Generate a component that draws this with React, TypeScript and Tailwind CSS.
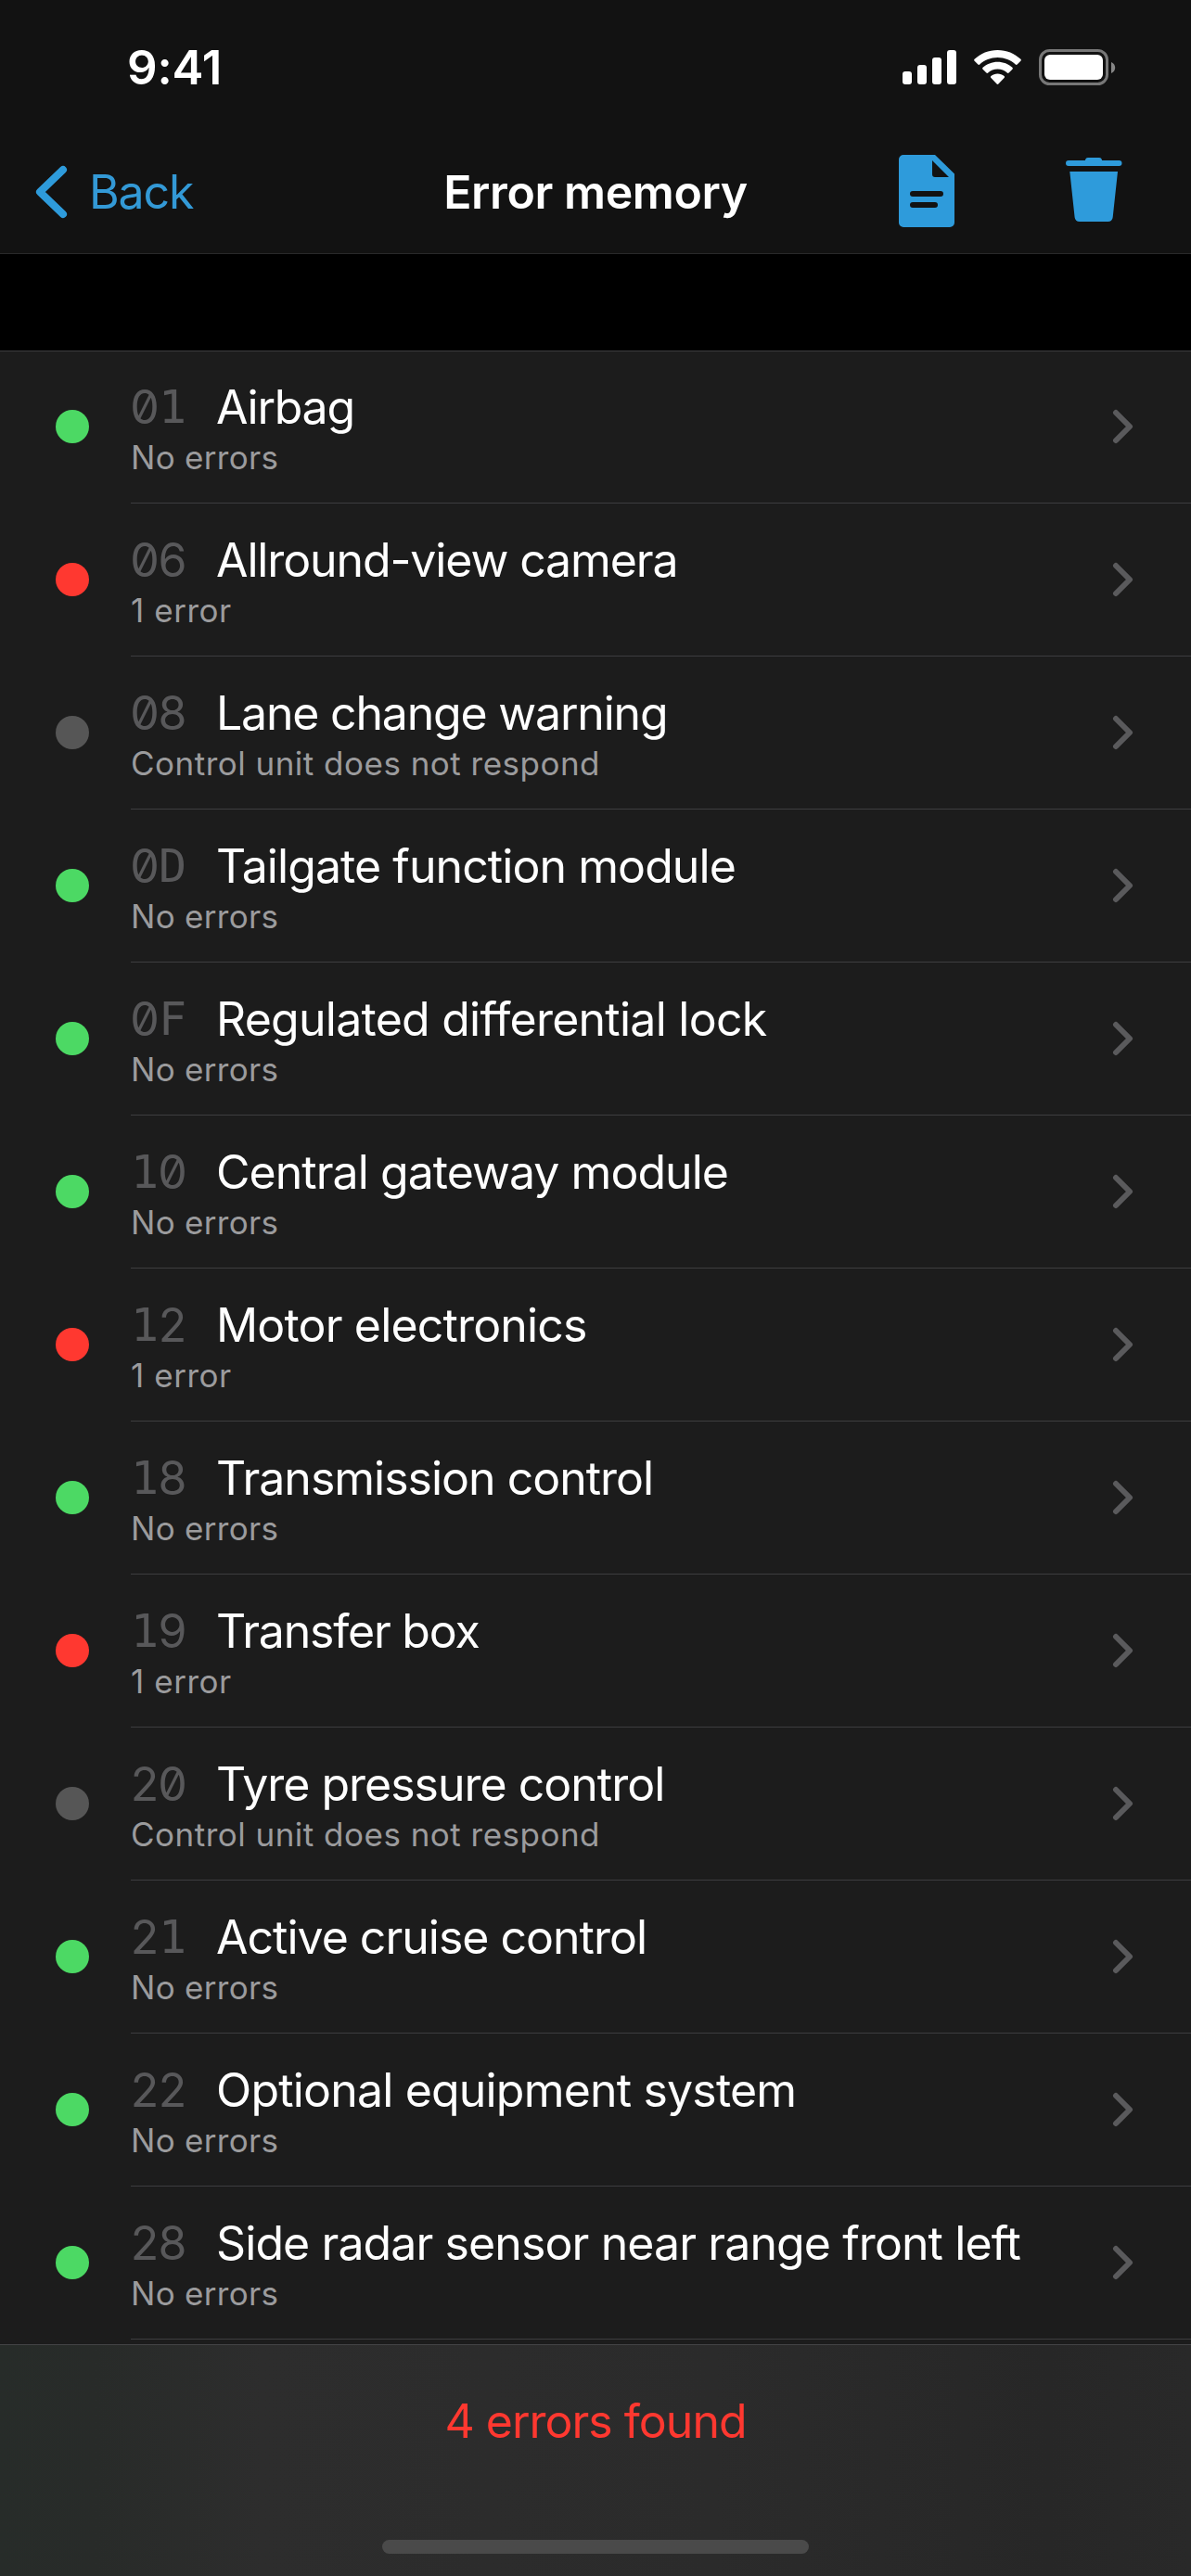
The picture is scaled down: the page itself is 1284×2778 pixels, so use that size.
type Status = "ok" | "error" | "offline"

type Unit = {
  code: string
  name: string
  status: Status
  tracking: string
}

const units: Unit[] = [
  { code: "01", name: "Airbag", status: "ok", tracking: "tracking-[-1.250px]" },
  { code: "06", name: "Allround-view camera", status: "error", tracking: "tracking-[-1.120px]" },
  { code: "08", name: "Lane change warning", status: "offline", tracking: "tracking-[-1.200px]" },
  { code: "0D", name: "Tailgate function module", status: "ok", tracking: "tracking-[-0.930px]" },
  { code: "0F", name: "Regulated differential lock", status: "ok", tracking: "tracking-[-0.750px]" },
  { code: "10", name: "Central gateway module", status: "ok", tracking: "tracking-[-0.960px]" },
  { code: "12", name: "Motor electronics", status: "error", tracking: "tracking-[-0.840px]" },
  { code: "18", name: "Transmission control", status: "ok", tracking: "tracking-[-1.000px]" },
  { code: "19", name: "Transfer box", status: "error", tracking: "tracking-[-1.220px]" },
  { code: "20", name: "Tyre pressure control", status: "offline", tracking: "tracking-[-1.000px]" },
  { code: "21", name: "Active cruise control", status: "ok", tracking: "tracking-[-1.000px]" },
  { code: "22", name: "Optional equipment system", status: "ok", tracking: "tracking-[-0.820px]" },
  { code: "28", name: "Side radar sensor near range front left", status: "ok", tracking: "tracking-[-0.900px]" },
]

const dotColor = {
  ok: "bg-[#4cd964]",
  error: "bg-[#ff3830]",
  offline: "bg-[#565656]",
}

const statusText = {
  ok: "No errors",
  error: "1 error",
  offline: "Control unit does not respond",
}

const statusTracking = {
  ok: "tracking-[0.300px]",
  error: "tracking-[0.550px]",
  offline: "tracking-[0.490px]",
}

function StatusIcons() {
  return (
    <svg className="w-[232px] h-[42px]" viewBox="972 52 232 42" fill="white">
      <rect x="973" y="77" width="10" height="14" rx="3" />
      <rect x="989" y="70" width="10" height="21" rx="3" />
      <rect x="1005" y="62" width="10" height="29" rx="3" />
      <rect x="1021" y="54" width="10" height="37" rx="3" />
      <path d="M1075.5 54c-9.600 0-18.300 3.700-24.900 9.800-.6.600-.6 1.300 0 1.900l3.800 3.800c.5.500 1.300.5 1.800 0 5.100-4.700 11.800-7.500 19.300-7.500s14.200 2.800 19.300 7.500c.5.500 1.300.5 1.800 0l3.800-3.800c.6-.6.6-1.300 0-1.900-6.600-6.100-15.300-9.800-24.900-9.800z" />
      <path d="M1075.500 66.700c-6.100 0-11.700 2.300-15.900 6.100-.6.500-.6 1.300 0 1.900l3.800 3.800c.5.500 1.300.5 1.800 0 2.700-2.400 6.300-3.900 10.300-3.900s7.600 1.500 10.300 3.900c.5.500 1.300.5 1.800 0l3.800-3.800c.6-.6.6-1.400 0-1.900-4.200-3.800-9.800-6.100-15.900-6.100z" />
      <path d="M1075.500 79.500c-2.700 0-5.200 1-7.100 2.600-.6.500-.6 1.300 0 1.800l6.200 6.600c.5.500 1.300.5 1.800 0l6.200-6.600c.6-.5.6-1.300 0-1.800-1.900-1.600-4.400-2.600-7.100-2.600z" />
      <rect x="1121.500" y="54.500" width="72" height="36" rx="10" fill="none" stroke="#777" strokeWidth="3" />
      <rect x="1126" y="59" width="63" height="27" rx="6" />
      <path d="M1198 67v12c2.500-1 4.200-3.300 4.200-6s-1.700-5-4.200-6z" fill="#868686" />
    </svg>
  )
}

function ReportIcon() {
  return (
    <svg className="w-[60px] h-[78px]" viewBox="0 0 60 78" fill="#2e9bdb">
      <path
        fillRule="evenodd"
        d="M5 0H39L60 20.500V73a5 5 0 0 1-5 5H5a5 5 0 0 1-5-5V5a5 5 0 0 1 5-5zM36 6v15a3 3 0 0 0 3 3h15zM15 39a3 3 0 0 0 0 6h30a3 3 0 0 0 0-6zM15 51a3 3 0 0 0 0 6h24a3 3 0 0 0 0-6z"
      />
    </svg>
  )
}

function TrashIcon() {
  return (
    <svg className="w-[61px] h-[70px]" viewBox="0 0 61 70" fill="#2e9bdb">
      <path d="M24 0h12c2 0 2.500 1 3.200 3H57.500a3 3 0 0 1 0 6H3a3 3 0 0 1 0-6H20.800c.7-2 1.200-3 3.200-3z" />
      <path d="M4.300 15H56L50.700 64.200A5.400 5.400 0 0 1 45.300 69H15a5.400 5.400 0 0 1-5.400-4.800z" />
    </svg>
  )
}

// every character sits in its own cell so that codes line up like monospace
function Code({ value }: { value: string }) {
  return (
    <span className="flex w-[92px] shrink-0 tracking-normal text-[#58585a]">
      {value.split("").map((c, i) => (
        <span
          key={i}
          className={
            /[1DF]/.test(c)
              ? "w-[30px] flex justify-center font-['DejaVu_Sans_Mono',monospace]"
              : "w-[30px] flex justify-center [font-feature-settings:'zero']"
          }
        >
          {c}
        </span>
      ))}
    </span>
  )
}

function UnitRow({ unit }: { unit: Unit }) {
  return (
    <li className="flex h-[165px] shrink-0">
      <div className="w-[141px] shrink-0 pl-[60px] pt-[64px]">
        <div className={`size-[36px] rounded-full ${dotColor[unit.status]}`} />
      </div>
      <div className="flex flex-1 justify-between border-b border-[#3d3d3f]">
        <div className="pt-[30px]">
          <div className="flex h-[62px] items-center whitespace-nowrap text-[50px] leading-[62px] text-white">
            <Code value={unit.code} />
            <span className={unit.tracking}>{unit.name}</span>
          </div>
          <p
            className={`mt-px whitespace-nowrap text-[35px] leading-[44px] text-[#9b9b9d] ${statusTracking[unit.status]}`}
          >
            {statusText[unit.status]}
          </p>
        </div>
        <svg
          className="mr-[62px] mt-[63px] h-[38px] w-[23px]"
          viewBox="0 0 23 38"
          fill="none"
          stroke="#5a5a5c"
          strokeWidth="6"
          strokeLinecap="round"
          strokeLinejoin="round"
        >
          <path d="M4 4L19 19L4 34" />
        </svg>
      </div>
    </li>
  )
}

export default function App() {
  return (
    <main className="flex h-[2778px] w-[1284px] flex-col overflow-hidden bg-black font-['Inter',sans-serif]">
      <header className="flex h-[274px] shrink-0 flex-col border-b border-[#29292a] bg-[#121212]">
        <div className="flex h-[144px] items-start justify-between pl-[137px] pr-[80px]">
          <span className="mt-[43px] text-[51px] font-semibold leading-[60px] tracking-[-0.200px] text-white">9:41</span>
          <div className="mt-[52px]">
            <StatusIcons />
          </div>
        </div>
        <div className="grid h-[129px] grid-cols-[1fr_340px_1fr]">
          <button className="flex items-start pl-[38px] text-[#3399d6]">
            <svg
              className="mt-[34px] h-[58px] w-[35px]"
              viewBox="0 0 35 58"
              fill="none"
              stroke="#2e9bdb"
              strokeWidth="8"
              strokeLinecap="round"
              strokeLinejoin="round"
            >
              <path d="M30 5L5 29L30 53" />
            </svg>
            <span className="ml-[23px] mt-[33px] text-[50px] leading-[60px] tracking-[-1.100px]">Back</span>
          </button>
          <h1 className="mt-[33px] whitespace-nowrap text-center text-[50px] font-semibold leading-[60px] tracking-[-0.400px] text-white">
            Error memory
          </h1>
          <div className="flex items-start justify-end gap-[120px] pr-[74px]">
            <div className="mt-[23px]">
              <ReportIcon />
            </div>
            <div className="mt-[26px]">
              <TrashIcon />
            </div>
          </div>
        </div>
      </header>

      <ul className="mt-[104px] flex h-[2150px] shrink-0 flex-col overflow-hidden bg-[#1c1c1c] shadow-[inset_0_1px_0_#3d3d3f]">
        {units.map((unit) => (
          <UnitRow key={unit.code} unit={unit} />
        ))}
      </ul>

      <footer className="flex flex-1 flex-col items-center border-t border-[#444446] bg-[#2a2a2a] bg-[linear-gradient(90deg,#272c29_0%,#282b29_8%,#2d2d2d_22%,#2b2b2b_60%,#272727_88%,#292929_100%)]">
        <p className="mt-[52px] whitespace-nowrap text-[50px] leading-[60px] tracking-[-1.000px] text-[#ff3830]">
          4 errors found
        </p>
        <div className="mt-[98px] h-[15px] w-[460px] rounded-full bg-[#4a4a4a]" />
      </footer>
    </main>
  )
}
